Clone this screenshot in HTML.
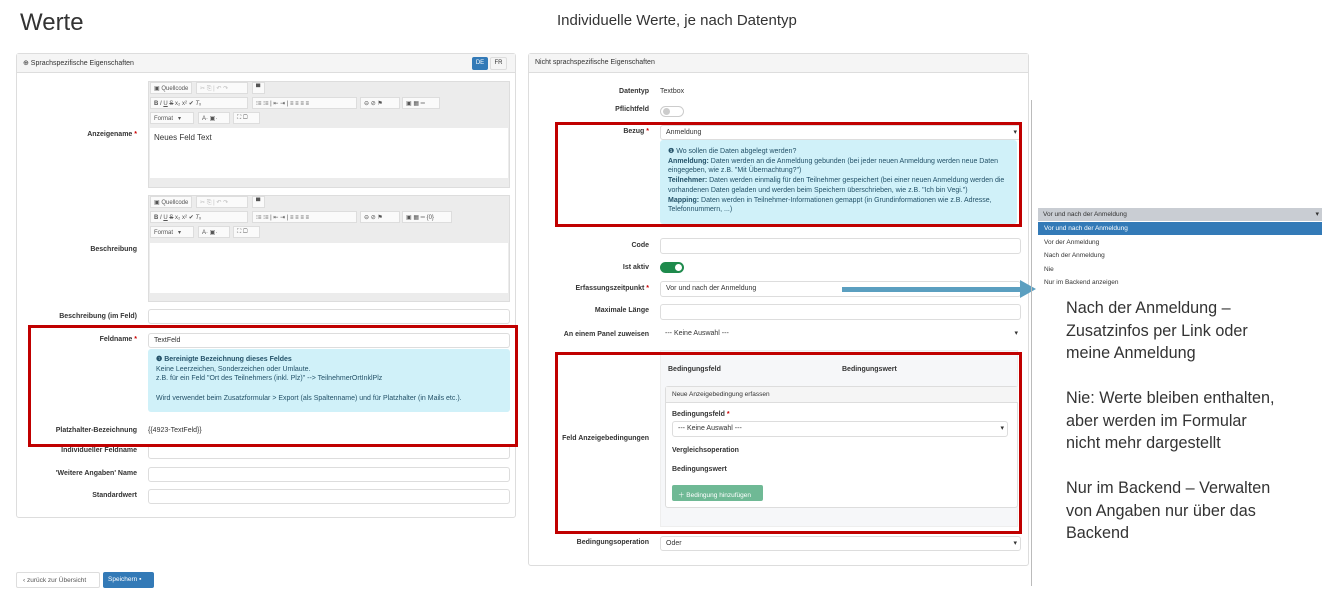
<!DOCTYPE html>
<html><head><meta charset="utf-8"><style>
*{box-sizing:border-box;margin:0;padding:0}
body{width:1322px;height:602px;background:#fff;font-family:"Liberation Sans",sans-serif;color:#333;position:relative;overflow:hidden}
.a{position:absolute}
.lbl{position:absolute;font-size:7px;font-weight:bold;text-align:right;white-space:nowrap}
.lbl i{color:#c00;font-style:normal}
.inp{position:absolute;border:1px solid #ddd;border-radius:3px;background:#fff;font-size:7px;padding:3px 5px;white-space:nowrap}
.panel{position:absolute;border:1px solid #ddd;border-radius:3px;background:#fff}
.ph{height:19px;background:#f5f5f5;border-bottom:1px solid #ddd;font-size:7px;padding:5px 6px}
.red{position:absolute;border:3px solid #c00000}
.info{position:absolute;background:#d0f1f9;border-radius:3px;font-size:7px;line-height:9.7px;padding:6px 8px;color:#245269}
.ed{position:absolute;background:#ececec;border:1px solid #ddd}
.tb{position:absolute;background:#fafafa;border:1px solid #ddd;height:12px;font-size:6px;color:#555;padding:2px 3px;white-space:nowrap}
.tog{position:absolute;width:24px;height:11px;border-radius:6px}
.sel::after{content:"▾";position:absolute;right:3px;top:2px;font-size:7px;color:#333}
.rt{position:absolute;left:1066px;font-size:16.2px;line-height:22.5px;color:#333}
</style></head><body>
<div class="a" style="left:20px;top:9px;font-size:24px">Werte</div>
<div class="a" style="left:557px;top:12px;font-size:15px">Individuelle Werte, je nach Datentyp</div>

<div class="panel" style="left:16px;top:53px;width:500px;height:465px"><div class="ph">⊕ Sprachspezifische Eigenschaften</div></div>
<div class="a" style="left:472px;top:57px;width:16px;height:13px;background:#337ab7;color:#fff;font-size:6px;text-align:center;line-height:13px;border-radius:2px">DE</div>
<div class="a" style="left:490px;top:57px;width:17px;height:13px;border:1px solid #ddd;font-size:6px;text-align:center;line-height:11px;border-radius:2px">FR</div>

<div class="ed" style="left:148px;top:81px;width:362px;height:107px"></div>
<div class="tb" style="left:150px;top:82px;width:42px">▣ Quellcode</div>
<div class="tb" style="left:196px;top:82px;width:52px;color:#bbb">✂ ⎘ | ↶ ↷</div>
<div class="tb" style="left:252px;top:82px;width:13px">▀</div>
<div class="tb" style="left:150px;top:97px;width:98px"><b>B</b> <i>I</i> <u>U</u> <s>S</s> x₂ x² ✔ <i>T</i>ₓ</div>
<div class="tb" style="left:252px;top:97px;width:105px">⁝≡ ⁝≡ | ⇤ ⇥ | ≡ ≡ ≡ ≡</div>
<div class="tb" style="left:360px;top:97px;width:40px">⊖ ⊘ ⚑</div>
<div class="tb" style="left:402px;top:97px;width:38px">▣ ▦ ═</div>
<div class="tb" style="left:150px;top:112px;width:44px">Format &nbsp; ▾</div>
<div class="tb" style="left:198px;top:112px;width:32px">A· ▣·</div>
<div class="tb" style="left:233px;top:112px;width:27px">⛶ ▢</div>
<div class="a" style="left:150px;top:128px;width:358px;height:50px;background:#fff;font-size:8px;padding:5px 4px">Neues Feld Text</div>

<div class="ed" style="left:148px;top:195px;width:362px;height:107px"></div>
<div class="tb" style="left:150px;top:196px;width:42px">▣ Quellcode</div>
<div class="tb" style="left:196px;top:196px;width:52px;color:#bbb">✂ ⎘ | ↶ ↷</div>
<div class="tb" style="left:252px;top:196px;width:13px">▀</div>
<div class="tb" style="left:150px;top:211px;width:98px"><b>B</b> <i>I</i> <u>U</u> <s>S</s> x₂ x² ✔ <i>T</i>ₓ</div>
<div class="tb" style="left:252px;top:211px;width:105px">⁝≡ ⁝≡ | ⇤ ⇥ | ≡ ≡ ≡ ≡</div>
<div class="tb" style="left:360px;top:211px;width:40px">⊖ ⊘ ⚑</div>
<div class="tb" style="left:402px;top:211px;width:50px">▣ ▦ ═ {0}</div>
<div class="tb" style="left:150px;top:226px;width:44px">Format &nbsp; ▾</div>
<div class="tb" style="left:198px;top:226px;width:32px">A· ▣·</div>
<div class="tb" style="left:233px;top:226px;width:27px">⛶ ▢</div>
<div class="a" style="left:150px;top:243px;width:358px;height:50px;background:#fff"></div>

<div class="lbl" style="right:1185px;top:131px">Anzeigename <i>*</i></div>
<div class="lbl" style="right:1185px;top:246px">Beschreibung</div>
<div class="lbl" style="right:1185px;top:313px">Beschreibung (im Feld)</div>
<div class="inp" style="left:148px;top:309px;width:362px;height:15px"></div>
<div class="lbl" style="right:1185px;top:336px">Feldname <i>*</i></div>
<div class="inp" style="left:148px;top:333px;width:362px;height:15px">TextFeld</div>
<div class="info" style="left:148px;top:349px;width:362px;height:63px;padding-top:6px"><b>❶ Bereinigte Bezeichnung dieses Feldes</b><br>Keine Leerzeichen, Sonderzeichen oder Umlaute.<br>z.B. für ein Feld "Ort des Teilnehmers (inkl. Plz)" --&gt; TeilnehmerOrtInklPlz<br><br>Wird verwendet beim Zusatzformular &gt; Export (als Spaltenname) und für Platzhalter (in Mails etc.).</div>
<div class="lbl" style="right:1185px;top:427px">Platzhalter-Bezeichnung</div>
<div class="a" style="left:148px;top:427px;font-size:7px">{{4923-TextFeld}}</div>
<div class="lbl" style="right:1185px;top:447px">Individueller Feldname</div>
<div class="inp" style="left:148px;top:444px;width:362px;height:15px"></div>
<div class="lbl" style="right:1185px;top:470px">'Weitere Angaben' Name</div>
<div class="inp" style="left:148px;top:467px;width:362px;height:15px"></div>
<div class="lbl" style="right:1185px;top:492px">Standardwert</div>
<div class="inp" style="left:148px;top:489px;width:362px;height:15px"></div>
<div class="red" style="left:28px;top:325px;width:490px;height:122px"></div>

<div class="a" style="left:16px;top:572px;width:84px;height:16px;border:1px solid #ddd;border-radius:2px;font-size:6.5px;padding:4px 6px;color:#555">‹ zurück zur Übersicht</div>
<div class="a" style="left:103px;top:572px;width:51px;height:16px;background:#337ab7;border-radius:2px;font-size:6.5px;padding:4px 5px;color:#fff">Speichern ▪</div>

<div class="panel" style="left:528px;top:53px;width:501px;height:513px"><div class="ph">Nicht sprachspezifische Eigenschaften</div></div>
<div class="lbl" style="right:673px;top:88px">Datentyp</div>
<div class="a" style="left:660px;top:88px;font-size:7px">Textbox</div>
<div class="lbl" style="right:673px;top:106px">Pflichtfeld</div>
<div class="tog" style="left:660px;top:106px;border:1px solid #ccc;background:#fff"><div class="a" style="left:2px;top:1px;width:7px;height:7px;border-radius:50%;background:#ccc"></div></div>
<div class="lbl" style="right:673px;top:128px">Bezug <i>*</i></div>
<div class="inp sel" style="left:660px;top:125px;width:361px;height:15px">Anmeldung</div>
<div class="info" style="left:660px;top:140px;width:357px;height:84px;padding-top:7px">❶ Wo sollen die Daten abgelegt werden?<br><b>Anmeldung:</b> Daten werden an die Anmeldung gebunden (bei jeder neuen Anmeldung werden neue Daten eingegeben, wie z.B. "Mit Übernachtung?")<br><b>Teilnehmer:</b> Daten werden einmalig für den Teilnehmer gespeichert (bei einer neuen Anmeldung werden die vorhandenen Daten geladen und werden beim Speichern überschrieben, wie z.B. "Ich bin Vegi.")<br><b>Mapping:</b> Daten werden in Teilnehmer-Informationen gemappt (in Grundinformationen wie z.B. Adresse, Telefonnummern, ...)</div>
<div class="red" style="left:555px;top:122px;width:467px;height:105px"></div>
<div class="lbl" style="right:673px;top:242px">Code</div>
<div class="inp" style="left:660px;top:238px;width:361px;height:16px"></div>
<div class="lbl" style="right:673px;top:264px">Ist aktiv</div>
<div class="tog" style="left:660px;top:262px;background:#1e8a4c"><div class="a" style="right:2px;top:2px;width:7px;height:7px;border-radius:50%;background:#fff"></div></div>
<div class="lbl" style="right:673px;top:285px">Erfassungszeitpunkt <i>*</i></div>
<div class="inp" style="left:660px;top:281px;width:361px;height:16px">Vor und nach der Anmeldung</div>
<div class="a" style="left:842px;top:287px;width:180px;height:5px;background:#5b9fc0"></div>
<div class="a" style="left:1020px;top:280px;width:0;height:0;border-top:9px solid transparent;border-bottom:9px solid transparent;border-left:16px solid #5b9fc0"></div>
<div class="lbl" style="right:673px;top:307px">Maximale Länge</div>
<div class="inp" style="left:660px;top:304px;width:361px;height:16px"></div>
<div class="lbl" style="right:673px;top:331px">An einem Panel zuweisen</div>
<div class="inp sel" style="left:660px;top:327px;width:361px;height:15px;border:none">--- Keine Auswahl ---</div>

<div class="a" style="left:660px;top:350px;width:358px;height:177px;background:#f6f7f9;border:1px solid #eee"></div>
<div class="a" style="left:668px;top:366px;font-size:7px;font-weight:bold">Bedingungsfeld</div>
<div class="a" style="left:842px;top:366px;font-size:7px;font-weight:bold">Bedingungswert</div>
<div class="a" style="left:665px;top:386px;width:353px;height:122px;background:#fff;border:1px solid #ddd;border-radius:3px"></div>
<div class="a" style="left:666px;top:387px;width:352px;height:16px;background:#f5f5f5;border-bottom:1px solid #ddd;font-size:6.5px;padding:4px 6px">Neue Anzeigebedingung erfassen</div>
<div class="a" style="left:672px;top:411px;font-size:7px;font-weight:bold">Bedingungsfeld <span style="color:#c00">*</span></div>
<div class="inp sel" style="left:672px;top:421px;width:336px;height:16px">--- Keine Auswahl ---</div>
<div class="a" style="left:672px;top:447px;font-size:7px;font-weight:bold">Vergleichsoperation</div>
<div class="a" style="left:672px;top:466px;font-size:7px;font-weight:bold">Bedingungswert</div>
<div class="a" style="left:672px;top:485px;width:91px;height:16px;background:#6fb995;border-radius:2px;color:#fff;font-size:6.5px;padding:4px 6px">＋ Bedingung hinzufügen</div>
<div class="lbl" style="right:673px;top:435px">Feld Anzeigebedingungen</div>
<div class="red" style="left:555px;top:352px;width:467px;height:182px"></div>
<div class="lbl" style="right:673px;top:539px">Bedingungsoperation</div>
<div class="inp sel" style="left:660px;top:536px;width:361px;height:15px">Oder</div>

<div class="a" style="left:1031px;top:100px;width:1px;height:486px;background:#bbb"></div>
<div class="a sel" style="left:1038px;top:208px;width:284px;height:13px;background:#c9cdd3;font-size:6.5px;padding:3px 5px">Vor und nach der Anmeldung</div>
<div class="a" style="left:1038px;top:222px;width:284px;height:13px;background:#337ab7;color:#fff;font-size:6.5px;padding:3px 6px">Vor und nach der Anmeldung</div>
<div class="a" style="left:1044px;top:239px;font-size:6.5px">Vor der Anmeldung</div>
<div class="a" style="left:1044px;top:252px;font-size:6.5px">Nach der Anmeldung</div>
<div class="a" style="left:1044px;top:266px;font-size:6.5px">Nie</div>
<div class="a" style="left:1044px;top:279px;font-size:6.5px">Nur im Backend anzeigen</div>
<div class="rt" style="top:297px">Nach der Anmeldung –<br>Zusatzinfos per Link oder<br>meine Anmeldung</div>
<div class="rt" style="top:387px">Nie: Werte bleiben enthalten,<br>aber werden im Formular<br>nicht mehr dargestellt</div>
<div class="rt" style="top:477px">Nur im Backend – Verwalten<br>von Angaben nur über das<br>Backend</div>
</body></html>
